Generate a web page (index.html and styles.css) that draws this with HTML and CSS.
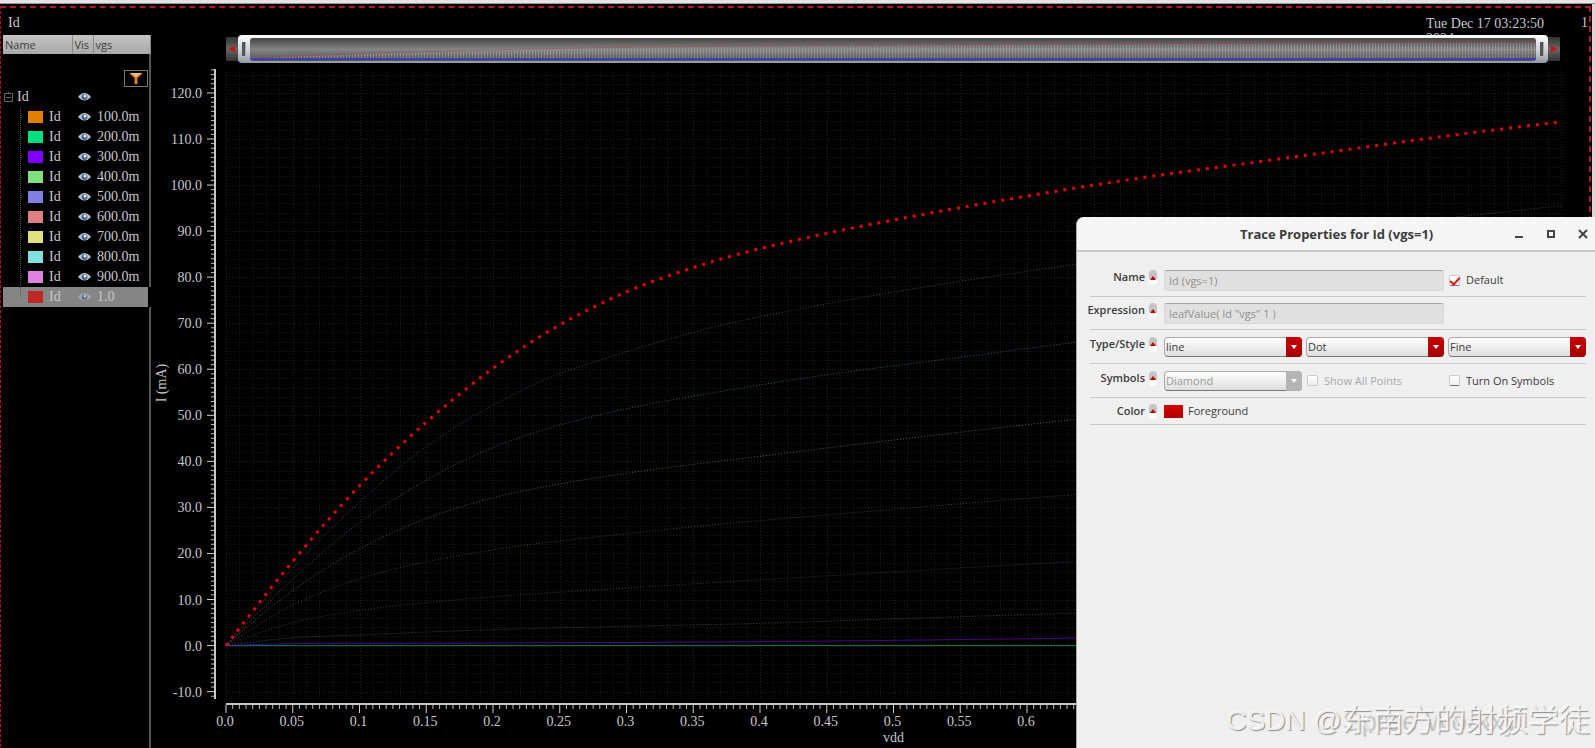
FILE: index.html
```html
<!DOCTYPE html>
<html lang="en">
<head>
<meta charset="utf-8">
<title>Id</title>
<link rel="stylesheet" href="styles.css">
</head>
<body>
<div class="window-edge"></div>
<main class="viewer">
  <header class="viewer-head">
    <span>Id</span>
    <span class="stamp"><time class="stamp-date">Tue Dec 17 03:23:50 2024</time><span class="stamp-index">1</span></span>
  </header>
  <div class="workspace">
    <aside class="traces">
      <table class="trace-table">
        <thead><tr><th class="col-name">Name</th><th class="col-vis">Vis</th><th>vgs</th></tr></thead>
        <tbody id="traces">
          <tr class="filter-row"><td colspan="3"><button class="filter" aria-label="Filter"><svg width="14" height="13" viewBox="0 0 14 13"><path d="M1 1h12v1L8.500 6v6h-3V6L1 2z" fill="#d9822f"/><path d="M2 1h10l-5 4z" fill="#f8c080"/></svg></button></td></tr>
        </tbody>
      </table>
    </aside>
    <section class="plot">
      <div class="range">
        <button class="range-arrow" aria-label="Pan left"><svg width="6" height="6" viewBox="0 0 6 6"><path d="M0 3L6 0v6z" fill="#e00000"/></svg></button>
        <div class="range-frame"><i class="grip"></i><div class="range-view"><svg id="overview"></svg></div><i class="grip"></i></div>
        <button class="range-arrow" aria-label="Pan right"><svg width="6" height="6" viewBox="0 0 6 6"><path d="M6 3L0 0v6z" fill="#e00000"/></svg></button>
      </div>
      <svg class="chart" id="chart" role="img" aria-label="I (mA) against vdd"></svg>
    </section>
  </div>
</main>
<form class="dialog">
  <header class="dialog-head">
    <h1>Trace Properties for Id (vgs=1)</h1>
    <div class="window-buttons">
      <button type="button" aria-label="Minimize"><svg width="10" height="10"><path d="M1 8h8" stroke="#444" stroke-width="2"/></svg></button>
      <button type="button" aria-label="Maximize"><svg width="10" height="10"><path d="M2 2h6v6H2z" fill="none" stroke="#444" stroke-width="2"/></svg></button>
      <button type="button" aria-label="Close"><svg width="10" height="10"><path d="M1 1l8 8M9 1l-8 8" stroke="#444" stroke-width="2"/></svg></button>
    </div>
  </header>
  <div class="rows">
    <div class="row"><label class="row-label" for="name">Name</label><i class="toggle"></i><input class="field" id="name" value="Id (vgs=1)" disabled><label class="check"><input type="checkbox" checked>Default</label></div>
    <div class="row"><label class="row-label" for="expr">Expression</label><i class="toggle"></i><input class="field" id="expr" value="leafValue( Id &quot;vgs&quot; 1 )" disabled></div>
    <div class="row"><label class="row-label" for="type">Type/Style</label><i class="toggle"></i><span class="combo"><select id="type"><option>line</option></select></span><span class="combo"><select aria-label="Line style"><option>Dot</option></select></span><span class="combo"><select aria-label="Line width"><option>Fine</option></select></span></div>
    <div class="row"><label class="row-label" for="symbol">Symbols</label><i class="toggle"></i><span class="combo off"><select id="symbol" disabled><option>Diamond</option></select></span><label class="check off"><input type="checkbox" disabled>Show All Points</label><label class="check"><input type="checkbox">Turn On Symbols</label></div>
    <div class="row short"><label class="row-label" for="color">Color</label><i class="toggle"></i><span class="color"><button type="button" id="color" aria-label="Color"></button>Foreground</span></div>
  </div>
</form>
<div class="watermark"><span class="mark-site">CSDN @</span><span class="mark-stack"><span class="mark-latin">Spree Workxy</span><span class="mark-cjk">东南方的射频学徒</span></span></div>
<script src="script.js"></script>
</body>
</html>
```
FILE: styles.css
```css
* { box-sizing: border-box; }
html, body { height: 100%; }
body {
  margin: 0;
  display: flex;
  flex-direction: column;
  position: relative;
  overflow: hidden;
  background: #000;
  color: #c8c8c8;
  font: 14px/20px "Liberation Serif", serif;
}
button { padding: 0; border: 0; background: none; }
.window-edge { flex: none; height: 4px; background: #e4e4e4; border-bottom: 1px solid #999; }
.viewer {
  flex: 1;
  min-height: 0;
  display: flex;
  flex-direction: column;
  padding-top: 8px;
  position: relative;
  border-right: 3px solid #d8d8d8;
}
.viewer::before {
  content: "";
  position: absolute;
  inset: 2px 1px -4px 0;
  border: 2px dashed #b5122f;
  border-left-width: 1px;
  pointer-events: none;
}
.viewer-head { display: flex; justify-content: space-between; height: 23px; padding: 1px 4px 0 8px; }
.stamp { display: flex; gap: 35px; }
.stamp-date { width: 120px; height: 24px; padding-top: 3px; line-height: 15px; overflow: hidden; }
.workspace { flex: 1; min-height: 0; display: flex; position: relative; }
.traces { width: 151px; padding-left: 3px; border-right: 2px solid #555; }
.trace-table { width: 148px; border-collapse: collapse; table-layout: fixed; }
.trace-table th {
  height: 19px;
  padding: 0 2px 1px;
  text-align: left;
  color: #3c3c3c;
  font: 11px/17px "Open Sans", sans-serif;
  background: linear-gradient(#c4c4c4, #a8a8a8);
  border-right: 1px solid #888;
}
.col-name { width: 69px; }
.col-vis { width: 21px; }
.trace-table td { height: 20px; padding: 0; line-height: 20px; }
.filter-row td { height: 33px; padding: 15px 3px 0 0; line-height: 0; text-align: right; }
.filter { width: 24px; height: 17px; border: 1px solid #777; display: inline-grid; place-items: center; }
.cell { display: flex; align-items: center; height: 20px; }
.root { gap: 4px; padding-left: 1px; }
.leaf { gap: 6px; }
.swatch { width: 15px; height: 12px; }
.selected { background: linear-gradient(90deg, #858585 145px, #000 145px); }
.eye { display: block; margin-left: 6px; }
.selected .eye { opacity: .6; }
.trace-table .value { padding-left: 4px; }
.plot { flex: 1; min-width: 0; display: flex; flex-direction: column; }
.range { display: flex; align-items: center; height: 28px; margin: 0 32px 0 75px; }
.range-arrow { width: 12px; height: 24px; background: linear-gradient(#333, #666 50%, #333); display: grid; place-items: center; }
.range-frame {
  flex: 1;
  height: 28px;
  display: flex;
  align-items: center;
  gap: 4px;
  padding: 2px 4px;
  border-radius: 4px;
  background: linear-gradient(#fff, #c8ccd2 60%, #8f98a4);
}
.grip { width: 4px; height: 14px; background: #555; border-right: 1px solid #aaa; }
.range-view { flex: 1; height: 23px; border-radius: 3px; background: linear-gradient(#444, #858585 50%, #505050); overflow: hidden; }
.range-view svg { display: block; width: 100%; height: 100%; }
.chart { flex: 1; min-height: 0; width: 100%; display: block; }
.chart text { fill: #c8c8c8; font: 14px "Liberation Serif", serif; }

.dialog {
  position: absolute;
  top: 217px;
  right: 0;
  bottom: 0;
  width: 519px;
  color: #3c3c3c;
  background: #efefef;
  border-left: 1px solid #aaa;
  border-radius: 8px 0 0 0;
  font: 11px/16px "Open Sans", sans-serif;
}
.dialog-head {
  display: flex;
  align-items: center;
  height: 35px;
  padding: 0 7px 0 163px;
  background: #f5f5f5;
  border-bottom: 2px solid #c9c9c4;
  border-radius: 8px 0 0 0;
}
.dialog-head h1 { flex: 1; margin: 0; font: bold 13px/20px "Open Sans", sans-serif; white-space: nowrap; }
.window-buttons { display: flex; gap: 22px; }
.window-buttons svg { display: block; }
.rows { padding: 12px 9px 0 13px; }
.row {
  display: grid;
  grid-template-columns: 55px 11px 1fr 1fr 1fr;
  column-gap: 4px;
  align-items: center;
  height: 33px;
  border-bottom: 1px solid #c8c8c8;
}
.row:nth-child(3), .row:nth-child(4) { height: 34px; }
.row.short { height: 27px; }
.row-label { justify-self: end; font-weight: 600; padding-bottom: 6px; white-space: nowrap; }
.short .row-label, .short .toggle { padding-bottom: 0; margin-bottom: 0; }
.toggle {
  width: 8px;
  height: 15px;
  margin-bottom: 5px;
  border-radius: 4px;
  background: linear-gradient(#c4c4c4 60%, #fff 60%);
  display: grid;
  place-items: center;
}
.toggle::after { content: ""; border: 3px solid transparent; border-top: 0; border-bottom: 4px solid #c00000; }
.field {
  grid-column: span 2;
  width: 100%;
  height: 21px;
  padding: 0 4px;
  color: #909090;
  background: #e0e0e0;
  border: 1px solid #d8d8d8;
  border-top-color: #a5a5a5;
  border-radius: 3px;
  font: inherit;
}
.check { display: flex; align-items: center; gap: 6px; white-space: nowrap; }
.row > .check { padding-left: 1px; }
.check input {
  appearance: none;
  width: 11px;
  height: 11px;
  margin: 0;
  background: linear-gradient(#fff, #eee);
  border: 1px solid #ccc;
  border-bottom-color: #777;
  border-radius: 2px;
  display: grid;
  place-items: center;
}
.check input:checked::after { content: ""; width: 8px; height: 4px; border: solid #d8141c; border-width: 0 0 2px 2px; transform: rotate(-48deg); }
.check.off { color: #aaa; }
.check.off input { border-color: #ccc; }
.combo { position: relative; }
.combo select {
  appearance: none;
  display: block;
  width: 100%;
  height: 20px;
  padding: 0 20px 0 1px;
  color: #3c3c3c;
  font: inherit;
  background: linear-gradient(#fff, #dedede);
  border: 1px solid #aaa;
  border-bottom-color: #777;
  border-radius: 4px;
}
.combo::before { content: ""; position: absolute; right: 0; top: 0; width: 16px; height: 20px; background: linear-gradient(#c90000, #a50000); border-radius: 0 4px 4px 0; pointer-events: none; }
.combo::after { content: ""; position: absolute; right: 5px; top: 8px; border: 3px solid transparent; border-top: 4px solid #fff; border-bottom: 0; pointer-events: none; }
.combo.off select { color: #999; opacity: 1; }
.combo.off::before { background: #b4b4b4; }
.color { grid-column: span 3; display: flex; align-items: center; gap: 5px; }
.color button { width: 19px; height: 13px; background: linear-gradient(#d80000, #b00000); }

.watermark {
  position: absolute;
  right: 5px;
  bottom: 5px;
  display: flex;
  color: #efefef;
  text-shadow: 1px 1px 1px #8a8a8a, -1px -1px 0 #fafafa;
  font: 31px/44px "Liberation Sans", "Noto Sans CJK SC", sans-serif;
  white-space: nowrap;
  pointer-events: none;
}
.mark-site { font-size: 28px; }
.mark-stack { display: grid; }
.mark-stack span { grid-area: 1 / 1; }
.mark-latin { font-size: 28px; color: transparent; text-shadow: 1px 1px 1px rgba(130, 130, 130, .4); }
.mark-cjk { font-weight: 300; }
```
FILE: script.js
```js
const traces = [
  ['100.0m', '#e08000', []],
  ['200.0m', '#00e080', [[0, 0], [1, 0]]],
  ['300.0m', '#8000ff', [[0, 0], [.03, .3], [.155, .5], [.43, .9], [.632, 1.6], [1, 2.6]]],
  ['400.0m', '#80e080', [[0, 0], [.05, 1.7], [.1, 2.3], [.155, 3], [.43, 5.1], [.5, 5.8], [.632, 7], [1, 10]]],
  ['500.0m', '#8080e0', [[0, 0], [.05, 5], [.1, 7.6], [.155, 9.5], [.2, 10.6], [.3, 12.5], [.43, 14.8], [.5, 16], [.632, 18.2], [1, 24]]],
  ['600.0m', '#e08080', [[0, 0], [.05, 8.8], [.1, 14.5], [.155, 18.5], [.2, 20.8], [.3, 24.3], [.5, 29.6], [.632, 32.7], [1, 40]]],
  ['700.0m', '#e0e080', [[0, 0], [.03, 7.5], [.06, 14], [.1, 21], [.133, 25.6], [.2, 32.1], [.233, 34.2], [.3, 37.4], [.4, 41.1], [.632, 49], [1, 59]]],
  ['800.0m', '#80e0e0', [[0, 0], [.05, 14.4], [.1, 26.7], [.139, 34.1], [.2, 43], [.233, 46.4], [.29, 50.8], [.355, 54.4], [.45, 58.8], [.55, 62.6], [.632, 65.7], [1, 77]]],
  ['900.0m', '#e080e0', [[0, 0], [.05, 16.8], [.1, 31.2], [.15, 43.2], [.2, 52.2], [.233, 57], [.3, 63.8], [.355, 68.4], [.45, 74.2], [.55, 79.1], [.632, 82.6], [.8, 89], [1, 95.5]]],
  ['1.0', '#c02828', [[0, 0], [.05, 18.3], [.1, 34.7], [.15, 48.5], [.2, 60.2], [.233, 66.7], [.3, 76.8], [.359, 82.9], [.45, 89.5], [.5, 92.4], [.55, 95.1], [.6, 97.6], [.65, 100], [.8, 106.1], [.945, 111.8], [1, 113.7]]]
];

const eye = '<svg class="eye" width="13" height="10" viewBox="0 0 13 10"><path d="M0 5Q6.500-3 13 5Q6.500 12 0 5z" fill="#b8cade"/><circle cx="6.500" cy="5" r="3" fill="#4a6488"/><circle cx="7" cy="4" r="1.500" fill="#e8eef6"/></svg>';
const branch = last => `<svg width="19" height="20"><path d="M17.5 0V${last ? 10 : 20}M18 10.500h5" stroke="#555" stroke-dasharray="1 1"/></svg>`;
document.getElementById('traces').insertAdjacentHTML('beforeend',
  `<tr><td><span class="cell root"><svg width="9" height="10"><path d="M.5 1.5h8v8h-8zM2 5.5h5M4.5 0v1" fill="none" stroke="#666"/></svg>Id</span></td><td>${eye}</td><td></td></tr>` +
  traces.map(([v, c], i) => `<tr${i === 9 ? ' class="selected"' : ''}><td><span class="cell leaf">${branch(i === 9)}<svg class="swatch"><rect width="15" height="12" fill="${c}"/></svg>Id</span></td><td>${eye}</td><td class="value">${v}</td></tr>`).join(''));

function smooth(p) {
  const n = p.length;
  const h = [], d = [], m = [];
  for (let i = 0; i < n - 1; i++) {
    h[i] = p[i + 1][0] - p[i][0];
    d[i] = (p[i + 1][1] - p[i][1]) / h[i];
  }
  for (let i = 1; i < n - 1; i++) m[i] = (d[i - 1] * h[i] + d[i] * h[i - 1]) / (h[i] + h[i - 1]);
  m[0] = n > 2 ? d[0] * 1.5 - m[1] * .5 : d[0];
  m[n - 1] = n > 2 ? d[n - 2] * 1.5 - m[n - 2] * .5 : d[0];
  let s = `M${p[0]}`;
  for (let i = 0; i < n - 1; i++) {
    const k = h[i] / 3;
    s += `C${p[i][0] + k},${p[i][1] + m[i] * k} ${p[i + 1][0] - k},${p[i + 1][1] - m[i + 1] * k} ${p[i + 1]}`;
  }
  return s;
}

function drawOverview() {
  const svg = document.getElementById('overview');
  const { width: w, height: h } = svg.getBoundingClientRect();
  const top = traces[9][2].map(p => [p[0] * w, h - 3 - p[1] / 113.7 * (h - 7)]);
  const curve = smooth(top);
  let out = `<defs><pattern id="stripes" width="3" height="4" patternUnits="userSpaceOnUse"><path d="M.5 0v4" stroke="#aab" stroke-opacity=".35"/></pattern></defs>`;
  out += `<path d="${curve}V${h - 3}H0z" fill="url(#stripes)"/>`;
  traces.forEach(([, c, pts], i) => {
    if (i < 3) return;
    const d = smooth(pts.map(p => [p[0] * w, h - 3 - p[1] / 113.7 * (h - 7)]));
    out += `<path d="${d}" fill="none" stroke="${i === 9 ? '#d02020' : c}" stroke-opacity="${i === 9 ? .8 : .3}" stroke-dasharray="1 2"/>`;
  });
  out += `<path d="M0 ${h - 2}H${w}" stroke="#3838c8" stroke-width="2" stroke-opacity=".8"/>`;
  svg.innerHTML = out;
}

function draw() {
  const svg = document.getElementById('chart');
  const { width: w, height: h } = svg.getBoundingClientRect();
  const left = 75, right = w - 31, top = 6, bottom = h - 49;
  const x = v => left + v * (right - left);
  const y = v => bottom - (v + 11.6) / 136.8 * (bottom - top);
  let minor = '', major = '', ticks = '', marks = '', out = '';
  for (let i = 0; i <= 100; i++) {
    const s = `M${Math.round(x(i / 100)) + .5} ${top}V${bottom}`;
    if (i % 5) minor += s; else major += s;
  }
  for (let v = -10; v <= 124; v += 2) {
    const s = `M${left} ${Math.round(y(v)) + .5}H${right}`;
    if (v % 10) minor += s; else major += s;
  }
  for (let v = -11; v <= 125; v++) {
    const s = `M${left - 11} ${y(v)}h`;
    if (v % 10) ticks += s + '-4'; else marks += s + '-8';
  }
  for (let i = 0; i <= 200; i++) {
    const s = `M${x(i / 200)} ${bottom + 6}v`;
    if (i % 10) ticks += s + '4'; else marks += s + '8';
  }
  out += `<path d="${minor}" stroke="#0e0e0e" stroke-dasharray="2 1"/><path d="${major}" stroke="#1f1f1f" stroke-dasharray="1 2"/>`;
  traces.forEach(([, c, pts], i) => {
    if (!pts.length) return;
    const d = smooth(pts.map(p => [x(p[0]), y(p[1])]));
    const style = i === 9
      ? 'stroke="#e80000" stroke-width="3" stroke-dasharray="3 6"'
      : i < 3 ? `stroke="${c}" stroke-opacity=".55"` : `stroke="${c}" stroke-opacity=".4" stroke-dasharray="1 2"`;
    out += `<path d="${d}" fill="none" ${style}/>`;
  });
  out += `<path d="${ticks}" stroke="#bbb"/><path d="${marks}" stroke="#d0d0d0"/>`;
  out += `<path d="M${left - 11} ${top}V${bottom}M${left} ${bottom + 5}H${right}" stroke="#c8c8c8" stroke-width="2"/>`;
  for (let v = -10; v <= 120; v += 10) out += `<text x="${left - 24}" y="${y(v) + 5}" text-anchor="end">${v.toFixed(1)}</text>`;
  for (let i = 0; i <= 20; i++) {
    const v = i / 20;
    if (left + v * (right - left) > w - 520) break;
    out += `<text x="${x(v) - 1}" y="${bottom + 27}" text-anchor="middle">${i % 20 ? v.toFixed(i ? String(v).length - 2 : 1) : v.toFixed(1)}</text>`;
  }
  out += `<text x="${x(.5)}" y="${bottom + 43}" text-anchor="middle">vdd</text>`;
  out += `<text transform="translate(15 ${y(57)}) rotate(-90)" text-anchor="middle">I (mA)</text>`;
  svg.innerHTML = out;
}

function drawAll() {
  drawOverview();
  draw();
}
drawAll();
addEventListener('resize', drawAll);
```
